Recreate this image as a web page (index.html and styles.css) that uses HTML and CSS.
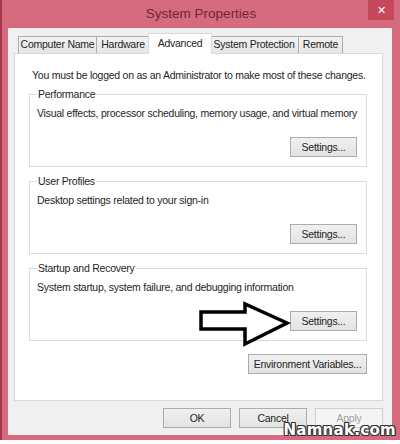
FILE: index.html
```html
<!DOCTYPE html>
<html lang="en">
<head>
    <meta charset="UTF-8">
    <title>System Properties</title>
    <link rel="stylesheet" href="styles.css">
</head>
<body>
    <div class="window">
        <div class="titlebar">
            <span></span>
            <span class="title">System Properties</span>
            <span class="close">&#x2715;</span>
        </div>

        <div class="client">
            <div class="tabs">
                <div class="tab tab-cn">Computer Name</div>
                <div class="tab tab-hw">Hardware</div>
                <div class="tab tab-adv active">Advanced</div>
                <div class="tab tab-sp">System Protection</div>
                <div class="tab tab-rm">Remote</div>
            </div>

            <div class="panel">
                <p class="note">You must be logged on as an Administrator to make most of these changes.</p>

                <fieldset class="group">
                    <legend>Performance</legend>
                    <p class="desc">Visual effects, processor scheduling, memory usage, and virtual memory</p>
                    <div class="row">
                        <button class="btn settings">Settings...</button>
                    </div>
                </fieldset>

                <fieldset class="group">
                    <legend>User Profiles</legend>
                    <p class="desc">Desktop settings related to your sign-in</p>
                    <div class="row">
                        <button class="btn settings">Settings...</button>
                    </div>
                </fieldset>

                <fieldset class="group startup">
                    <legend>Startup and Recovery</legend>
                    <p class="desc">System startup, system failure, and debugging information</p>
                    <div class="row">
                        <button class="btn settings">Settings...</button>
                    </div>
                    <svg class="arrow" width="96" height="46" viewBox="0 0 96 46">
                        <path d="M3 11 H47 V3 L89 22 L47 43 V28 H3 Z" fill="#fff" stroke="#000" stroke-width="3.5" stroke-linejoin="miter"/>
                    </svg>
                </fieldset>

                <div class="row env-row">
                    <button class="btn env">Environment Variables...</button>
                </div>
            </div>

            <div class="footer">
                <button class="btn foot">OK</button>
                <button class="btn foot">Cancel</button>
                <button class="btn foot disabled">Apply</button>
            </div>
        </div>

        <div class="watermark">Namnak.com</div>
    </div>
</body>
</html>
```

FILE: styles.css
```css
body {
    margin: 0;
    background-color: #fff;
    font-family: "Liberation Sans", Arial, sans-serif;
    font-size: 10.5px;
    letter-spacing: -0.25px;
    color: #1e1e1e;
}

.window {
    position: relative;
    width: 398px;
    height: 440px;
    background-color: #d66a7e;
    border-left: 2px solid #a53a4e;
    display: flex;
    flex-direction: column;
}

.titlebar {
    height: 28px;
    display: grid;
    grid-template-columns: 1fr auto 1fr;
    align-items: start;
}

.title {
    font-size: 13.5px;
    letter-spacing: 0;
    line-height: 28px;
    color: #6e2836;
}

.close {
    justify-self: end;
    width: 26px;
    height: 20px;
    margin-right: 6px;
    background-color: #c6485b;
    color: #fff;
    font-size: 11px;
    line-height: 20px;
    text-align: center;
}

.client {
    flex: 1;
    margin: 0 8px 5px 6px;
    padding: 5px 9px 7px 6px;
    background-color: #f0f0f0;
    display: flex;
    flex-direction: column;
}

/* tabs */
.tabs {
    display: flex;
    align-items: flex-end;
    margin-left: 4px;
    height: 21px;
    position: relative;
    z-index: 1;
    margin-bottom: -1px;
}

.tab {
    box-sizing: border-box;
    height: 17px;
    line-height: 15px;
    text-align: center;
    white-space: nowrap;
    border: 1px solid #adadad;
    border-bottom: none;
    background: linear-gradient(#f2f2f2, #e6e6e6);
    margin-bottom: 1px;
}

.tab + .tab {
    border-left: none;
}

.tab-cn { width: 79px; }
.tab-hw { width: 53px; }
.tab-adv { width: 60px; }
.tab-sp { width: 89px; }
.tab-rm { width: 44px; }

.tab.active {
    height: 21px;
    line-height: 18px;
    margin: 0 -2px;
    width: 64px;
    background: #fff;
    border: 1px solid #d9d9d9;
    border-bottom: none;
    margin-bottom: 0;
    position: relative;
}

.tab.active + .tab {
    border-left: none;
}

/* page */
.panel {
    box-sizing: border-box;
    height: 348px;
    background-color: #fff;
    border: 1px solid #d9d9d9;
    padding: 14px 15px 0 14px;
}

.note {
    margin: 0 0 0 3px;
    line-height: 14px;
    white-space: nowrap;
}

.group {
    position: relative;
    margin: 5px 0 0 0;
    padding: 0 9px 9px 7px;
    border: 1px solid #dcdcdc;
    box-shadow: inset 1px 1px 0 #fff, 1px 1px 0 #fff;
}

.group + .group {
    margin-top: 7px;
}

.group legend {
    padding: 0 1px;
    line-height: 14px;
}

.desc {
    margin: 5px 0 17px 0;
    line-height: 14px;
    white-space: nowrap;
}

.row {
    display: flex;
    justify-content: flex-end;
}

.btn {
    box-sizing: border-box;
    height: 20px;
    padding: 0;
    font-family: inherit;
    font-size: 10.5px;
    letter-spacing: -0.25px;
    white-space: nowrap;
    color: #1e1e1e;
    border: 1px solid #acacac;
    background: linear-gradient(#f0f0f0, #e3e3e3);
}

.settings {
    width: 67px;
}

.env-row {
    margin-top: 13px;
}

.env {
    width: 119px;
}

.arrow {
    position: absolute;
    left: 168px;
    top: 26px;
}

.footer {
    display: flex;
    justify-content: flex-end;
    gap: 8px;
    margin-top: 7px;
}

.foot {
    width: 68px;
}

.foot.disabled {
    color: #a0a0a0;
    border-color: #d0d0d0;
    background: #f4f4f4;
}

.watermark {
    position: absolute;
    right: 4px;
    bottom: 1px;
    font-family: "DejaVu Sans", sans-serif;
    font-weight: bold;
    font-size: 15px;
    letter-spacing: 0.3px;
    color: #fff;
    text-shadow: 1px 0 0 #333, -1px 0 0 #333, 0 1px 0 #333, 0 -1px 0 #333,
        1px 1px 0 #333, -1px -1px 0 #333, 1px -1px 0 #333, -1px 1px 0 #333;
}
```
